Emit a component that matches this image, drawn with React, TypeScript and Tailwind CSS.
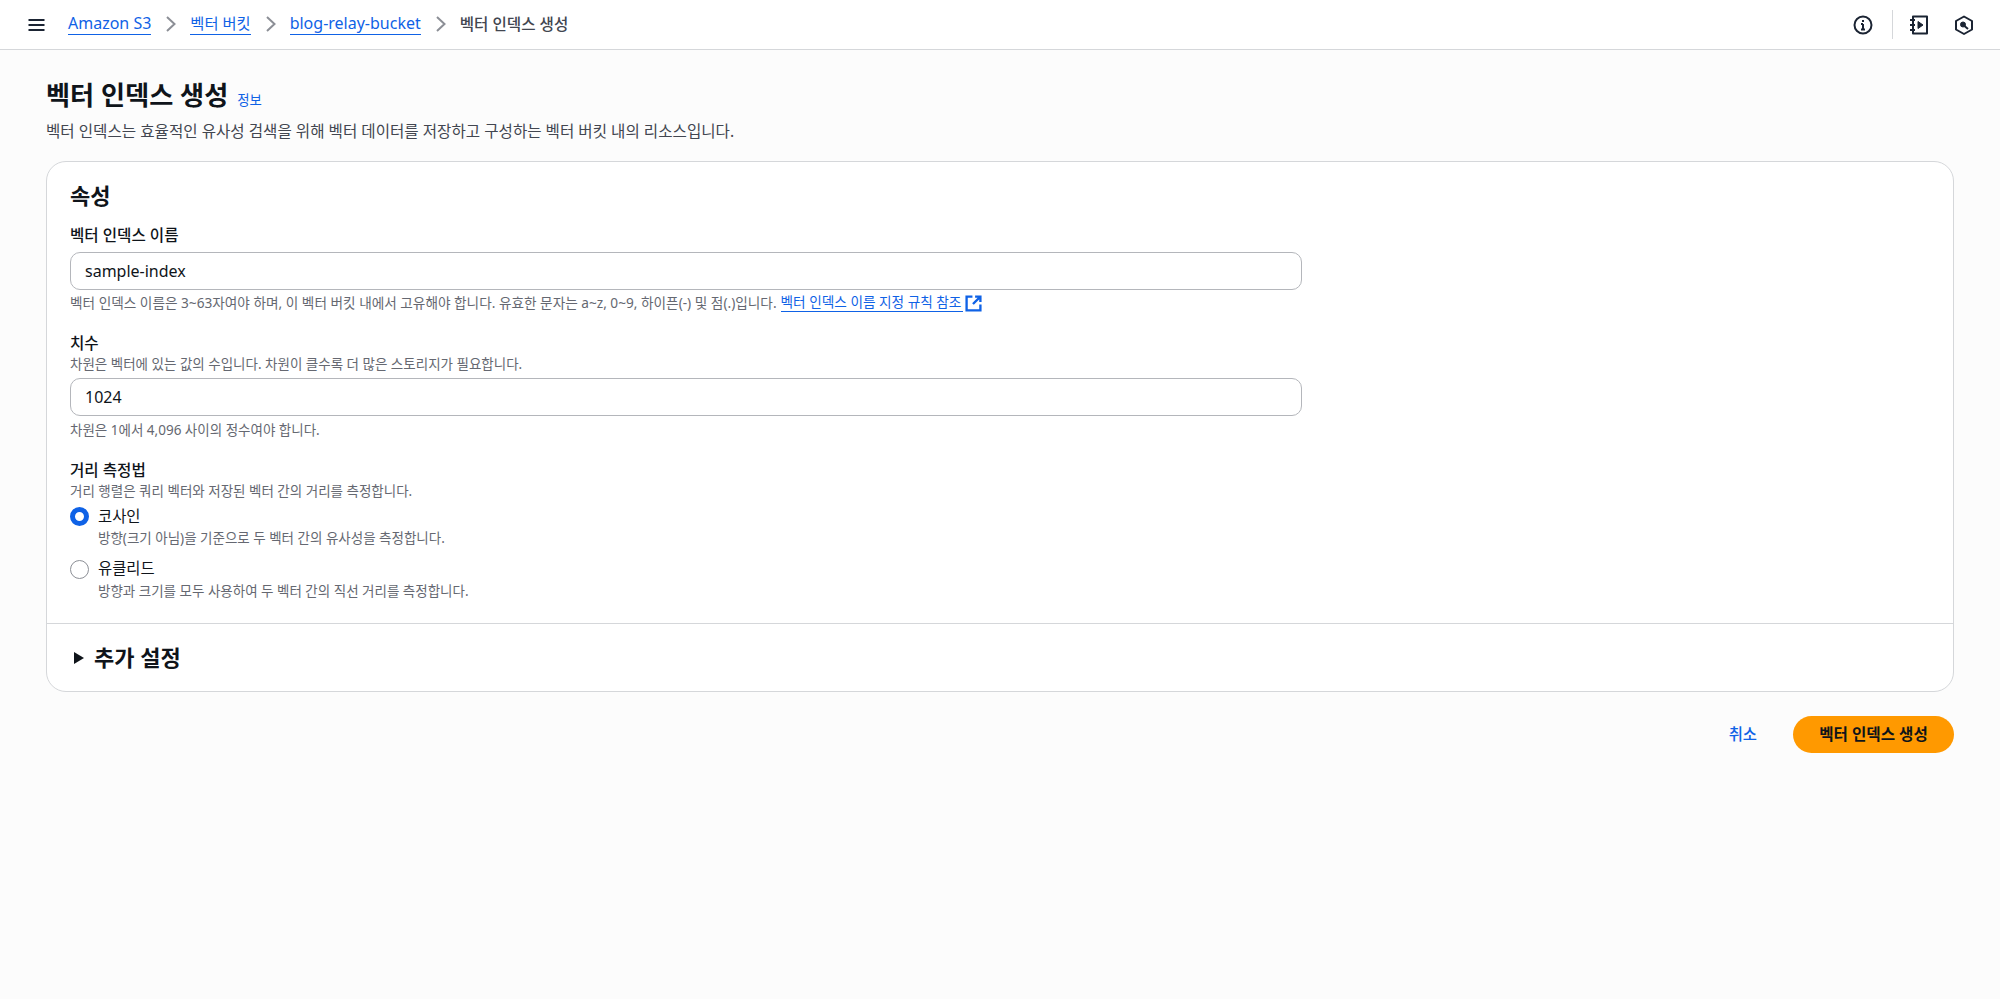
import React from 'react';

const FONT = "font-['Noto_Sans','Noto_Sans_CJK_KR',sans-serif]";

const Chevron = () => (
  <svg viewBox="0 0 10 16" className="w-[10px] h-4 ml-[15px] mr-[14px] text-[#8c8f96]" fill="none" stroke="currentColor" strokeWidth="2">
    <path d="M1 1l7.500 7L1 15" />
  </svg>
);

const Crumb = ({ children, className = 'text-[16px]' }: { children: React.ReactNode; className?: string }) => (
  <a className={`text-[#0f62e6] leading-[20px] border-b border-[#0f62e6] pb-[1px] ${className}`}>{children}</a>
);

const Header = () => (
  <header className="h-[50px] bg-white border-b border-[#d5d7da] flex items-center pl-[28px] pr-[26px]">
    <svg viewBox="0 0 16 14" className="w-[17px] h-[14px] text-[#1b2433] mr-[23px]" fill="none" stroke="currentColor" strokeWidth="2">
      <path d="M0 2h16M0 7h16M0 12h16" />
    </svg>
    <nav className="flex items-center">
      <Crumb>Amazon S3</Crumb>
      <Chevron />
      <Crumb className="text-[15.3px]">벡터 버킷</Crumb>
      <Chevron />
      <Crumb>blog-relay-bucket</Crumb>
      <Chevron />
      <span className="text-[#424650] text-[15.6px] font-medium">벡터 인덱스 생성</span>
    </nav>
    <div className="ml-auto flex items-center text-[#1b2433]">
      <svg viewBox="0 0 20 20" className="w-5 h-5" fill="none" stroke="currentColor" strokeWidth="2">
        <circle cx="10" cy="10" r="8.5" />
        <path d="M10 9v5.5M8 14.5h4M8 9h2M10 5v2" />
      </svg>
      <div className="w-px h-[29px] bg-[#d5d7da] ml-[19px] mr-[16px]" />
      <svg viewBox="0 0 20 20" className="w-5 h-5" fill="none" stroke="currentColor" strokeWidth="2">
        <path d="M4 1.500h14v17H4z" strokeLinejoin="round" />
        <path d="M1 5h5M1 10h5M1 15h5" />
        <path d="M9 6.500 14 10l-5 3.500z" fill="currentColor" strokeWidth="1" />
      </svg>
      <svg viewBox="0 0 20 20" className="w-5 h-5 ml-[25px]" fill="none" stroke="currentColor" strokeWidth="2">
        <path d="M10 1.500 18 6v8.500l-8 4.500-8-4.500V6z" strokeLinejoin="round" />
        <circle cx="9" cy="9.500" r="2.500" fill="currentColor" strokeWidth="1" />
        <path d="M10.500 11 14 14" />
      </svg>
    </div>
  </header>
);

const Hint = ({ children, className = '' }: { children: React.ReactNode; className?: string }) => (
  <div className={`text-[#656871] text-[13.5px] leading-[16px] ${className}`}>{children}</div>
);

const Label = ({ children }: { children: React.ReactNode }) => (
  <div className="text-[#0f141a] text-[15.6px] leading-[20px] font-medium">{children}</div>
);

const Field = ({ value }: { value: string }) => (
  <div className="w-[1232px] h-[38px] rounded-[10px] border border-[#b4b6bb] bg-white flex items-center pl-[14px] text-[16px] text-[#0f141a]">
    {value}
  </div>
);

const Radio = ({ checked, label, desc, className = '' }: { checked?: boolean; label: string; desc: string; className?: string }) => (
  <div className={`flex ${className}`}>
    <div className={`w-[28px] shrink-0 ${checked ? '' : 'pt-[1px]'}`}>
      {checked ? (
        <div className="w-[19px] h-[19px] rounded-full border-[5px] border-[#0f62e6] bg-white" />
      ) : (
        <div className="w-[19px] h-[19px] rounded-full border border-[#8c8f96] bg-white" />
      )}
    </div>
    <div>
      <div className="text-[#0f141a] text-[15.4px] leading-[20px]">{label}</div>
      <Hint className={checked ? 'mt-[3px]' : 'mt-[4px]'}>{desc}</Hint>
    </div>
  </div>
);

export default function App() {
  return (
    <div className={`min-h-[999px] bg-[#fcfcfc] ${FONT}`}>
      <Header />
      <main className="px-[46px] pt-[27px]">
        <div className="flex items-baseline">
          <h1 className="text-[26.2px] leading-[36px] font-semibold text-[#0f141a]">벡터 인덱스 생성</h1>
          <a className="ml-[9px] text-[13.4px] text-[#0f62e6]">정보</a>
        </div>
        <p className="text-[15.6px] leading-[20px] text-[#424650] mt-[8px]">
          벡터 인덱스는 효율적인 유사성 검색을 위해 벡터 데이터를 저장하고 구성하는 벡터 버킷 내의 리소스입니다.
        </p>

        <section className="mt-[20px] w-[1908px] rounded-[20px] border border-[#d5d7da] bg-white">
          <div className="pl-[23px] pt-[18px] pb-[24px]">
            <h2 className="text-[22px] leading-[30px] font-semibold text-[#0f141a]">속성</h2>
            <div className="mt-[15px]"><Label>벡터 인덱스 이름</Label></div>
            <div className="mt-[7px]"><Field value="sample-index" /></div>
            <div className="text-[#656871] text-[13.65px] leading-[16px] mt-[4px] flex items-center">
              벡터 인덱스 이름은 3~63자여야 하며, 이 벡터 버킷 내에서 고유해야 합니다. 유효한 문자는 a~z, 0~9, 하이픈(-) 및 점(.)입니다.
              <a className="ml-[4px] text-[#0f62e6] border-b border-[#0f62e6] pb-[1px] pr-[2px]">벡터 인덱스 이름 지정 규칙 참조</a>
              <svg viewBox="0 0 16 16" className="w-[17px] h-[17px] ml-[2px] text-[#0f62e6]" fill="none" stroke="currentColor" strokeWidth="2.2">
                <path d="M7 1.500H1.500v13h13V9" />
                <path d="M9.500 1.500h5v5M14.500 1.500 7.500 8.500" />
              </svg>
            </div>

            <div className="mt-[21px]"><Label>치수</Label></div>
            <Hint className="mt-[3px]">차원은 벡터에 있는 값의 수입니다. 차원이 클수록 더 많은 스토리지가 필요합니다.</Hint>
            <div className="mt-[6px]"><Field value="1024" /></div>
            <Hint className="mt-[6px]">차원은 1에서 4,096 사이의 정수여야 합니다.</Hint>

            <div className="mt-[22px]"><Label>거리 측정법</Label></div>
            <Hint className="mt-[3px]">거리 행렬은 쿼리 벡터와 저장된 벡터 간의 거리를 측정합니다.</Hint>
            <Radio className="mt-[8px]" checked label="코사인" desc="방향(크기 아님)을 기준으로 두 벡터 간의 유사성을 측정합니다." />
            <Radio className="mt-[13px]" label="유클리드" desc="방향과 크기를 모두 사용하여 두 벡터 간의 직선 거리를 측정합니다." />
          </div>
          <div className="border-t border-[#d5d7da] h-[68px] pl-[27px] flex items-center">
            <svg viewBox="0 0 10 12" className="w-[10px] h-[12px] text-[#0f141a] mr-[10px]">
              <path d="M0 0 10 6 0 12z" fill="currentColor" />
            </svg>
            <span className="text-[22px] font-semibold text-[#0f141a]">추가 설정</span>
          </div>
        </section>

        <div className="w-[1908px] flex justify-end items-center mt-[24px]">
          <a className="text-[15.4px] font-medium text-[#0f62e6] mr-[36px]">취소</a>
          <button className="w-[161px] h-[37px] rounded-full bg-[#ff9900] text-[15.6px] font-semibold text-[#0f141a]">벡터 인덱스 생성</button>
        </div>
      </main>
    </div>
  );
}
